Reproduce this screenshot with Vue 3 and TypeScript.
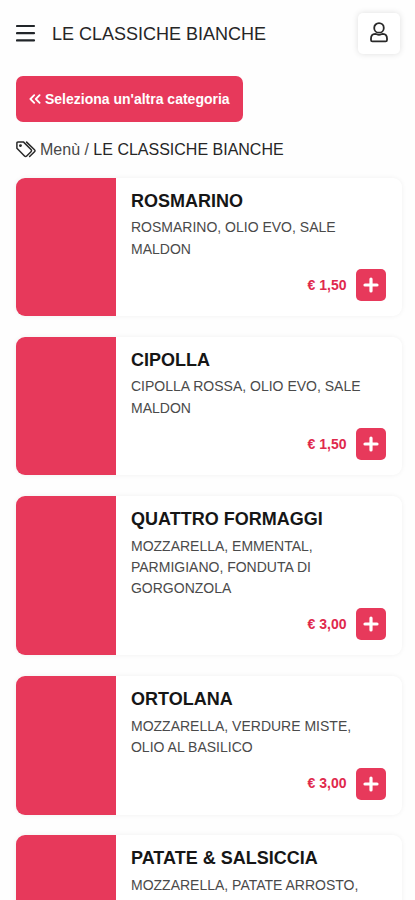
<script setup lang="ts">
interface Dish {
  name: string
  lines: string[]
  price: string
}

const category = 'LE CLASSICHE BIANCHE'

const dishes: Dish[] = [
  { name: 'ROSMARINO', lines: ['ROSMARINO, OLIO EVO, SALE', 'MALDON'], price: '1,50' },
  { name: 'CIPOLLA', lines: ['CIPOLLA ROSSA, OLIO EVO, SALE', 'MALDON'], price: '1,50' },
  {
    name: 'QUATTRO FORMAGGI',
    lines: ['MOZZARELLA, EMMENTAL,', 'PARMIGIANO, FONDUTA DI', 'GORGONZOLA'],
    price: '3,00',
  },
  { name: 'ORTOLANA', lines: ['MOZZARELLA, VERDURE MISTE,', 'OLIO AL BASILICO'], price: '3,00' },
  { name: 'PATATE & SALSICCIA', lines: ['MOZZARELLA, PATATE ARROSTO,'], price: '' },
]
</script>

<template>
  <div class="page">
    <header class="topbar">
      <button class="menu" aria-label="Menu">
        <svg width="20" height="18" viewBox="0 0 20 18">
          <path d="M1 2H18M1 9.2H18M1 16.4H18" stroke="#212529" stroke-width="2.2" stroke-linecap="round" />
        </svg>
      </button>
      <h1>{{ category }}</h1>
      <button class="user" aria-label="Account">
        <svg width="18" height="21" viewBox="0 0 18 21" fill="none" stroke="#292929" stroke-width="1.8">
          <circle cx="9" cy="5.9" r="4.8" />
          <path d="M5.2 11.8C2.6 12 1 13.9 1 16.5V18C1 18.9 1.5 19.4 2.4 19.4H15.6C16.5 19.4 17 18.9 17 18V16.5C17 13.9 15.4 12 12.8 11.8C11.6 11.8 10.9 12.9 9 12.9S6.4 11.8 5.2 11.8Z" />
        </svg>
      </button>
    </header>

    <button class="back">
      <svg width="12" height="10" viewBox="0 0 12 10" fill="none" stroke="#fff" stroke-width="1.8" stroke-linecap="round" stroke-linejoin="round">
        <path d="M5.2 1.2L1.4 5L5.2 8.8M10.6 1.2L6.8 5L10.6 8.8" />
      </svg>
      <span>Seleziona un'altra categoria</span>
    </button>

    <nav class="crumbs">
      <svg width="20" height="17" viewBox="0 0 20 17" fill="none" stroke="#292929" stroke-width="1.5" stroke-linejoin="round" stroke-linecap="round">
        <path d="M.9 2.1V7.2L8.5 15C9.2 15.7 10 15.7 10.7 15L15 10.7C15.7 10 15.7 9.2 15 8.5L7.6 1.1H1.9C1.2 1.1.9 1.4.9 2.1Z" />
        <path d="M10.6 1.1L18.5 8.8C19.2 9.4 19.2 10 18.5 10.7L13.6 15.5" />
        <circle cx="4.5" cy="4.6" r=".7" fill="#292929" />
      </svg>
      <span><span class="root">Menù /</span> {{ category }}</span>
    </nav>

    <main class="list">
      <article v-for="dish in dishes" :key="dish.name" class="card">
        <div class="thumb"></div>
        <div class="body">
          <h2>{{ dish.name }}</h2>
          <p><span v-for="line in dish.lines" :key="line" class="line">{{ line }}</span></p>
          <div v-if="dish.price" class="buy">
            <span class="price">€ {{ dish.price }}</span>
            <button class="add" aria-label="Aggiungi">
              <svg width="16" height="16" viewBox="0 0 16 16">
                <path d="M8 2V14M2 8H14" stroke="#fff" stroke-width="3.2" stroke-linecap="round" />
              </svg>
            </button>
          </div>
        </div>
      </article>
    </main>
  </div>
</template>

<style>
body {
  background: #fff;
  overflow: hidden;
}
</style>

<style scoped>
.page {
  box-sizing: border-box;
  width: 415px;
  height: 900px;
  overflow: hidden;
  padding: 12px 14px 0 16px;
  background: #fefefe;
  color: #262626;
  font-family: "Liberation Sans", Arial, sans-serif;
}
button {
  border: 0;
  padding: 0;
  background: none;
  font: inherit;
}
svg {
  display: block;
  flex: none;
}
.topbar {
  display: flex;
  align-items: center;
  height: 42px;
}
.menu {
  width: 20px;
  margin-right: 16px;
}
h1 {
  flex: 1;
  margin: 0;
  padding-top: 2px;
  font-size: 18px;
  line-height: 24px;
  font-weight: 400;
}
.user {
  display: flex;
  align-items: center;
  justify-content: center;
  width: 42px;
  height: 41px;
  margin-right: 1px;
  padding-bottom: 2px;
  box-sizing: border-box;
  border-radius: 5px;
  background: #fff;
  box-shadow: 0 0 6px rgba(0, 0, 0, 0.13);
}
.back {
  display: flex;
  align-items: center;
  gap: 4px;
  width: 227px;
  height: 46px;
  margin-top: 22px;
  padding: 0 0 1px 13px;
  border-radius: 7px;
  background: #e7395b;
  color: #fff;
  font-size: 14px;
  font-weight: 700;
  white-space: nowrap;
}
.crumbs {
  display: flex;
  align-items: center;
  gap: 4px;
  height: 24px;
  margin-top: 15px;
  padding-top: 1px;
  font-size: 16px;
  white-space: nowrap;
}
.crumbs svg {
  margin-bottom: 2px;
}
.root {
  color: #484848;
}
.list {
  display: flex;
  flex-direction: column;
  gap: 20.4px;
  margin-top: 15.5px;
}
.card {
  display: flex;
  flex: none;
  width: 386px;
  min-height: 138.8px;
  border-radius: 9px;
  overflow: hidden;
  background: #fff;
  box-shadow: 0 0 5px rgba(0, 0, 0, 0.06);
}
.thumb {
  flex: none;
  width: 99.6px;
  background: #e7395b;
}
.body {
  flex: 1;
  display: flex;
  flex-direction: column;
  padding: 11.5px 16px 15px 15.4px;
}
h2 {
  margin: 0;
  font-size: 18px;
  line-height: 24px;
  font-weight: 700;
  color: #161616;
}
p {
  margin: 4.3px 0 0;
  font-size: 14px;
  line-height: 21.3px;
  color: #4a4a4a;
}
.line {
  display: block;
  white-space: nowrap;
}
.buy {
  display: flex;
  align-items: center;
  justify-content: flex-end;
  gap: 9.5px;
  margin-top: auto;
  padding-top: 8.8px;
}
.price {
  padding-bottom: 1px;
  color: #df294d;
  font-size: 14px;
  font-weight: 700;
}
.add {
  display: flex;
  align-items: center;
  justify-content: center;
  width: 30px;
  height: 32px;
  border-radius: 5px;
  background: #e7395b;
}
</style>
